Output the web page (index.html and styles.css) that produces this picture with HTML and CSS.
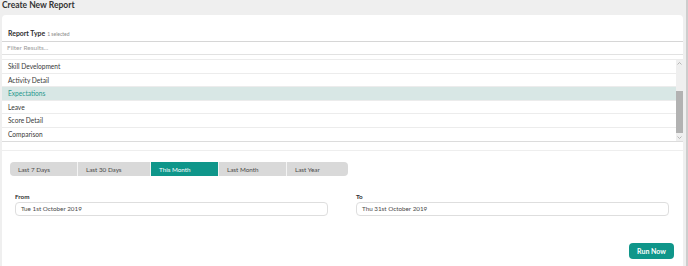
FILE: index.html
```html
<!DOCTYPE html>
<html lang="en">

<head>
  <meta charset="UTF-8">
  <meta name="viewport" content="width=device-width, initial-scale=1.0">
  <title>Create New Report</title>
  <link rel="stylesheet" href="styles.css">
</head>

<body>
  <div class="page">
    <h1 class="title">Create New Report</h1>
    <div class="card">
      <div class="type-head">
        <span class="type-label">Report Type</span>
        <span class="type-count">1 selected</span>
      </div>
      <div class="filter">Filter Results...</div>

      <div class="list">
        <ul class="rows">
          <li>Skill Development</li>
          <li>Activity Detail</li>
          <li class="active">Expectations</li>
          <li>Leave</li>
          <li>Score Detail</li>
          <li>Comparison</li>
        </ul>
        <div class="scroll">
          <svg class="arrow" width="5" height="3" viewBox="0 0 5 3"><path d="M0.5 2.5 L2.5 0.5 L4.5 2.5" fill="none" stroke="#a8a8a8" stroke-width="0.8"/></svg>
          <div class="track">
            <div class="thumb"></div>
          </div>
          <svg class="arrow" width="5" height="3" viewBox="0 0 5 3"><path d="M0.5 0.5 L2.5 2.5 L4.5 0.5" fill="none" stroke="#a8a8a8" stroke-width="0.8"/></svg>
        </div>
      </div>

      <div class="range-section">
        <div class="ranges">
          <button>Last 7 Days</button>
          <button>Last 30 Days</button>
          <button class="on">This Month</button>
          <button>Last Month</button>
          <button>Last Year</button>
        </div>

        <div class="dates">
          <label>
            <span>From</span>
            <div class="date-input">Tue 1st October 2019</div>
          </label>
          <label>
            <span>To</span>
            <div class="date-input">Thu 31st October 2019</div>
          </label>
        </div>

        <div class="actions">
          <button class="run">Run Now</button>
        </div>
      </div>
    </div>
  </div>
</body>

</html>
```

FILE: styles.css
```css
* {
  margin: 0;
  padding: 0;
  box-sizing: border-box;
}

body {
  background-color: #efefef;
  font-family: Lato, "Open Sans", sans-serif;
  color: #3a3a3a;
  height: 266px;
  overflow: hidden;
}

.page {
  height: 266px;
  padding: 0 3px 0 2px;
  border-right: 2px solid #cdcdcd;
  display: flex;
  flex-direction: column;
}

.title {
  font-size: 8.5px;
  font-weight: bold;
  color: #333;
  height: 15px;
  line-height: 10px;
}

.card {
  flex: 1;
  background-color: white;
  border-radius: 4px 4px 0 0;
  padding-top: 12px;
}

.type-head {
  padding: 1px 0 0 6px;
  height: 14px;
  line-height: 10px;
  display: flex;
  align-items: baseline;
}

.type-label {
  font-size: 6.9px;
  font-weight: bold;
  color: #2e2e2e;
}

.type-count {
  font-size: 5px;
  color: #8a8a8a;
  margin-left: 2px;
}

.filter {
  border-top: 1px solid #d6d6d6;
  border-bottom: 1px solid #e2e2e2;
  height: 14px;
  line-height: 12px;
  font-size: 6.5px;
  color: #9c9c9c;
  padding-left: 5px;
}

.list {
  margin-top: 4px;
  display: flex;
  border-top: 1px solid #ececec;
  border-bottom: 1px solid #dcdcdc;
  height: 83px;
}

.rows {
  flex: 1;
  list-style: none;
}

.rows li {
  height: 13.6px;
  line-height: 12.6px;
  border-bottom: 1px solid #ececec;
  font-size: 6.6px;
  padding-left: 6px;
  color: #383838;
}

.rows li:last-child {
  border-bottom: none;
}

.rows li.active {
  background-color: #d8e7e5;
  color: #1f978c;
}

.scroll {
  width: 7px;
  background-color: #efefef;
  display: flex;
  flex-direction: column;
  align-items: center;
  padding: 2px 0;
}

.arrow {
  display: block;
  flex: none;
}

.track {
  flex: 1;
  width: 100%;
  display: flex;
  flex-direction: column;
  justify-content: flex-end;
  padding: 2px 0 3px;
}

.thumb {
  height: 42px;
  background-color: #b2b2b2;
}

.range-section {
  margin-top: 8px;
  border-top: 1px solid #eeeeee;
  padding: 11px 9px 0 8px;
}

.ranges {
  display: grid;
  grid-template-columns: 67px 73px 68px 68px 62px;
  width: 338px;
  height: 14px;
  border-radius: 4px;
  overflow: hidden;
}

.ranges button {
  border: none;
  border-left: 1px solid #f4f4f4;
  background-color: #d9d9d9;
  color: #4a4a4a;
  font-family: Lato, "Open Sans", sans-serif;
  font-size: 6.3px;
  text-align: left;
  padding-left: 8px;
}

.ranges button:first-child {
  border-left: none;
}

.ranges button.on {
  background-color: #0f968a;
  color: white;
}

.dates {
  display: grid;
  grid-template-columns: 313px 313px;
  gap: 28px;
  padding-left: 5px;
  margin-top: 16px;
}

.dates label span {
  display: block;
  font-size: 6.3px;
  font-weight: bold;
  color: #2e2e2e;
  height: 10px;
  line-height: 10px;
}

.date-input {
  height: 14px;
  border: 1px solid #dedede;
  border-radius: 4px;
  font-size: 6.3px;
  line-height: 12px;
  padding-left: 5px;
  color: #4a4a4a;
}

.actions {
  display: flex;
  justify-content: flex-end;
  margin-top: 27px;
}

.run {
  width: 45px;
  height: 16px;
  border: none;
  border-radius: 4px;
  background-color: #0f968a;
  color: white;
  font-family: Lato, "Open Sans", sans-serif;
  font-size: 7px;
  font-weight: bold;
}
```
